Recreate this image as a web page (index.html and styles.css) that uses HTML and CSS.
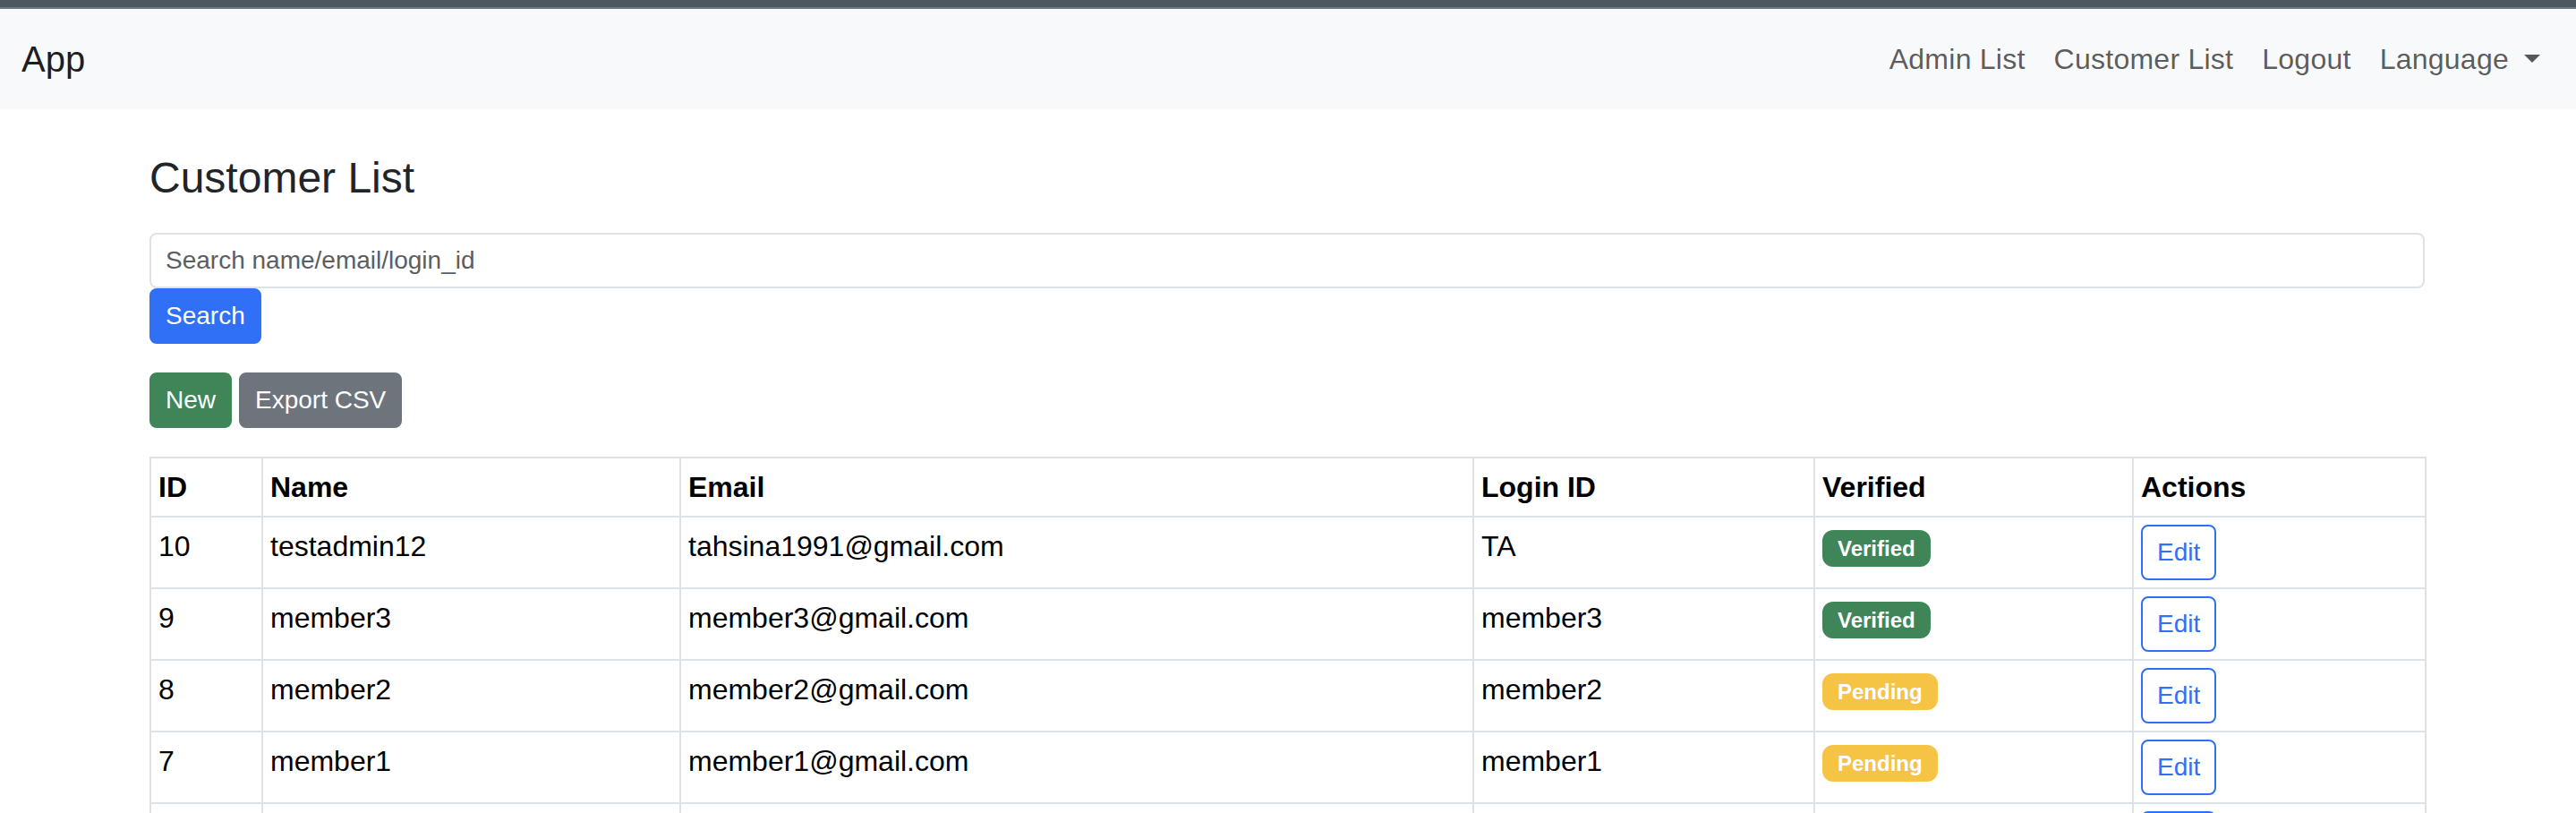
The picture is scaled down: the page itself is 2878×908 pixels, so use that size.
FILE: index.html
```html
<!DOCTYPE html>
<html lang="en">
<head>
<meta charset="utf-8">
<title>Customer List</title>
<link rel="stylesheet" href="styles.css">
</head>
<body>
<div class="topbar"></div>
<nav class="navbar">
  <a class="brand" href="#">App</a>
  <ul class="nav">
    <li><a class="nav-link" href="#">Admin List</a></li>
    <li><a class="nav-link" href="#">Customer List</a></li>
    <li><a class="nav-link" href="#">Logout</a></li>
    <li><a class="nav-link dropdown" href="#">Language<span class="caret"></span></a></li>
  </ul>
</nav>
<main class="container">
  <h1 class="title">Customer List</h1>
  <form class="search-form">
    <input class="form-control" type="text" placeholder="Search name/email/login_id">
    <button class="btn btn-primary" type="button">Search</button>
  </form>
  <div class="toolbar">
    <a class="btn btn-success" href="#">New</a>
    <a class="btn btn-secondary" href="#">Export CSV</a>
  </div>
  <table class="table">
    <colgroup>
      <col class="c-id"><col class="c-name"><col class="c-email"><col class="c-login"><col class="c-ver"><col class="c-act">
    </colgroup>
    <thead>
      <tr><th>ID</th><th>Name</th><th>Email</th><th>Login ID</th><th>Verified</th><th>Actions</th></tr>
    </thead>
    <tbody>
      <tr><td>10</td><td>testadmin12</td><td>tahsina1991@gmail.com</td><td>TA</td><td><span class="badge badge-success">Verified</span></td><td><a class="btn btn-outline" href="#">Edit</a></td></tr>
      <tr><td>9</td><td>member3</td><td>member3@gmail.com</td><td>member3</td><td><span class="badge badge-success">Verified</span></td><td><a class="btn btn-outline" href="#">Edit</a></td></tr>
      <tr><td>8</td><td>member2</td><td>member2@gmail.com</td><td>member2</td><td><span class="badge badge-warning">Pending</span></td><td><a class="btn btn-outline" href="#">Edit</a></td></tr>
      <tr><td>7</td><td>member1</td><td>member1@gmail.com</td><td>member1</td><td><span class="badge badge-warning">Pending</span></td><td><a class="btn btn-outline" href="#">Edit</a></td></tr>
      <tr class="row-clipped"><td></td><td></td><td></td><td></td><td></td><td><span class="btn btn-outline btn-stub"></span></td></tr>
    </tbody>
  </table>
</main>
</body>
</html>
```
FILE: styles.css
```css
html, body {
  margin: 0;
  padding: 0;
  background: #fff;
}
body {
  font-family: "Liberation Sans", Arial, sans-serif;
  font-size: 32px;
  line-height: 1.5;
  color: #212529;
}
.topbar {
  height: 8px;
  background: #4b5862;
  border-bottom: 2px solid #6e7982;
}
.navbar {
  display: flex;
  align-items: center;
  justify-content: space-between;
  background: #f8f9fa;
  padding: 16px 24px;
}
.brand {
  font-size: 40px;
  line-height: 60px;
  padding: 10px 0;
  color: rgba(0, 0, 0, 0.9);
  text-decoration: none;
}
.nav {
  display: flex;
  list-style: none;
  margin: 0;
  padding: 0;
}
.nav-link {
  display: block;
  padding: 16px;
  line-height: 48px;
  letter-spacing: 0.25px;
  color: rgba(0, 0, 0, 0.65);
  text-decoration: none;
}
.caret {
  display: inline-block;
  margin-left: 17px;
  vertical-align: 7px;
  border-top: 9.6px solid;
  border-left: 9px solid transparent;
  border-right: 9px solid transparent;
}
.container {
  margin: 0 169px 0 167px;
}
.title {
  margin: 48px 0 32px;
  font-size: 48px;
  font-weight: 500;
  line-height: 1.2;
  color: #212529;
}
.search-form {
  margin: 0 0 32px;
}
.form-control {
  display: block;
  box-sizing: border-box;
  width: 100%;
  font-family: inherit;
  font-size: 28px;
  line-height: 42px;
  padding: 8px 16px;
  border: 2px solid #dee2e6;
  border-radius: 8px;
  color: #212529;
  background: #fff;
  outline: none;
}
.form-control::placeholder {
  color: #5b5e62;
}
.btn {
  display: inline-block;
  font-family: inherit;
  font-size: 28px;
  line-height: 42px;
  padding: 8px 16px;
  border: 2px solid transparent;
  border-radius: 8px;
  text-decoration: none;
  color: #fff;
  cursor: pointer;
  vertical-align: middle;
}
.btn-primary {
  background: #3070f6;
  border-color: #3070f6;
}
.btn-success {
  background: #408558;
  border-color: #408558;
}
.btn-secondary {
  background: #6e747c;
  border-color: #6e747c;
}
.btn-outline {
  color: #3070f6;
  border-color: #3070f6;
  background: #fff;
  vertical-align: baseline;
}
.btn-stub {
  width: 48px;
  height: 42px;
  vertical-align: top;
}
.toolbar {
  display: flex;
  gap: 8px;
  margin-bottom: 32px;
}
.table {
  width: 100%;
  table-layout: fixed;
  border-collapse: collapse;
  color: #000;
}
.c-id { width: 125px; }
.c-name { width: 467px; }
.c-email { width: 886px; }
.c-login { width: 381px; }
.c-ver { width: 356px; }
.c-act { width: 327px; }
.table th,
.table td {
  border: 2px solid #dee2e6;
  padding: 8px;
  line-height: 48px;
  text-align: left;
  vertical-align: top;
}
.table th {
  font-weight: 700;
}
.badge {
  display: inline-block;
  font-size: 24px;
  font-weight: 700;
  line-height: 1;
  padding: 8.4px 17px;
  border-radius: 12px;
  color: #fff;
}
.badge-success {
  background: #408558;
}
.badge-warning {
  background: #f5c445;
}
```
